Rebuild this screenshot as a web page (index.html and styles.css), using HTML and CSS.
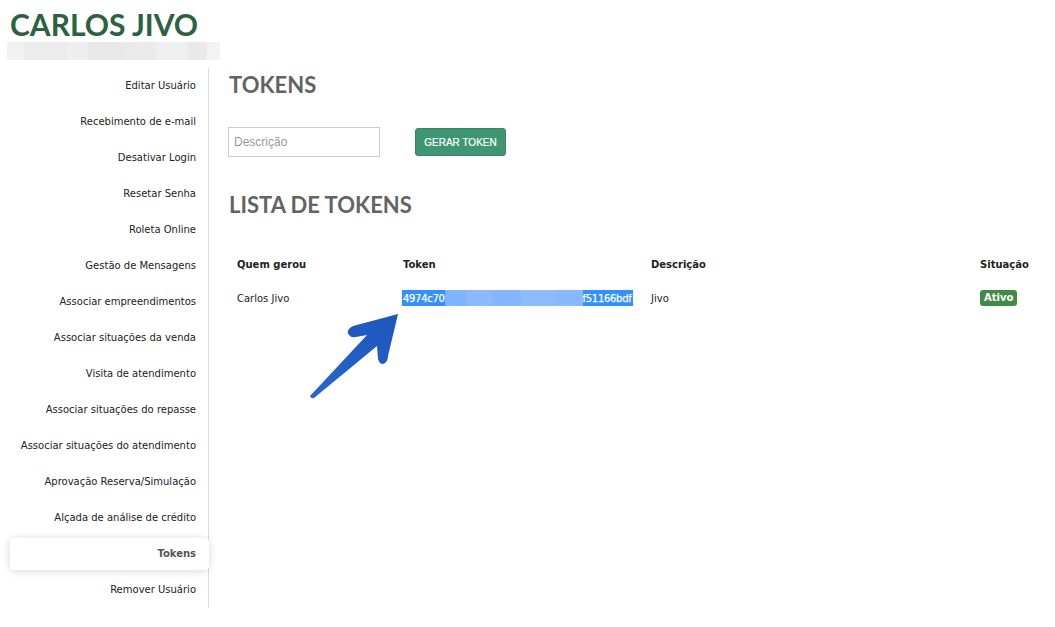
FILE: index.html
```html
<!DOCTYPE html>
<html lang="pt-BR">
<head>
<meta charset="utf-8">
<title>Tokens</title>
<link rel="stylesheet" href="styles.css">
</head>
<body>
<header class="top">
  <h1 class="user-name">CARLOS JIVO</h1>
  <div class="blur-bar"></div>
</header>
<div class="layout">
  <nav class="side">
    <a class="side-item">Editar Usuário</a>
    <a class="side-item">Recebimento de e-mail</a>
    <a class="side-item">Desativar Login</a>
    <a class="side-item">Resetar Senha</a>
    <a class="side-item">Roleta Online</a>
    <a class="side-item">Gestão de Mensagens</a>
    <a class="side-item">Associar empreendimentos</a>
    <a class="side-item">Associar situações da venda</a>
    <a class="side-item">Visita de atendimento</a>
    <a class="side-item">Associar situações do repasse</a>
    <a class="side-item">Associar situações do atendimento</a>
    <a class="side-item">Aprovação Reserva/Simulação</a>
    <a class="side-item">Alçada de análise de crédito</a>
    <a class="side-item active">Tokens</a>
    <a class="side-item">Remover Usuário</a>
  </nav>
  <main class="content">
    <h2 class="section-title">TOKENS</h2>
    <div class="token-form">
      <input class="desc-input" type="text" placeholder="Descrição">
      <button class="btn-gen">GERAR TOKEN</button>
    </div>
    <h2 class="section-title list-title">LISTA DE TOKENS</h2>
    <table class="tokens">
      <colgroup>
        <col class="c1"><col class="c2"><col class="c3"><col class="c4">
      </colgroup>
      <thead>
        <tr><th>Quem gerou</th><th>Token</th><th>Descrição</th><th>Situação</th></tr>
      </thead>
      <tbody>
        <tr>
          <td>Carlos Jivo</td>
          <td><span class="token-sel"><span class="token-part">4974c70</span><span class="token-blur"></span><span class="token-part">f51166bdf</span></span></td>
          <td>Jivo</td>
          <td><span class="badge">Ativo</span></td>
        </tr>
      </tbody>
    </table>
  </main>
</div>
<svg class="arrow" viewBox="300 305 110 100" width="110" height="100" aria-hidden="true">
  <defs>
    <linearGradient id="ag" x1="0" y1="1" x2="1" y2="0">
      <stop offset="0" stop-color="#2a66cc"/>
      <stop offset="1" stop-color="#1d55bd"/>
    </linearGradient>
  </defs>
  <path d="M398 314 L353 326 Q345 330 349 335 Q351 338 356 337 L367 335 L310 396 Q311 399 314 398 L377 346 L378 359 Q380 366 385 363 Q388 361 388 356 Z" fill="url(#ag)"/>
</svg>
</body>
</html>
```
FILE: styles.css
```css
* { box-sizing: border-box; }
html, body { margin: 0; padding: 0; background: #fff; }
body {
  position: relative;
  width: 1055px;
  min-height: 627px;
  font-family: "DejaVu Sans", Verdana, sans-serif;
  font-size: 10px;
  color: #222;
}
.top { padding: 6px 0 0 0; }
.user-name {
  margin: 0 0 0 10px;
  font-family: Lato, "Liberation Sans", sans-serif;
  font-weight: 700;
  font-size: 30px;
  line-height: 36px;
  color: #2c6141;
}
.blur-bar {
  margin-left: 7px;
  width: 213px;
  height: 18px;
  background: linear-gradient(90deg, #f1f1f1 0 8%, #ececec 8% 28%, #eeeeee 28% 38%, #e8e8e8 38% 55%, #eaeaea 55% 70%, #efefef 70% 85%, #e9e9e9 85% 94%, #f3f3f3 94% 100%);
}
.layout {
  display: flex;
  margin-top: 8px;
}
.side {
  width: 209px;
  flex: none;
  display: flex;
  flex-direction: column;
  border-right: 1px solid #dcdcdc;
}
.side-item {
  display: block;
  height: 36px;
  line-height: 36px;
  text-align: right;
  padding-right: 12px;
  color: #222;
  white-space: nowrap;
}
.side-item.active {
  height: 32px;
  line-height: 32px;
  margin: 2px -1px 2px 10px;
  background: #fff;
  border-radius: 4px;
  box-shadow: 0 1px 8px rgba(0,0,0,0.16);
  font-weight: 700;
  color: #555;
  padding-right: 13px;
}
.content {
  flex: 1;
  padding-left: 20px;
  padding-right: 8px;
}
.section-title {
  margin: 3px 0 0;
  font-family: Lato, "Liberation Sans", sans-serif;
  font-weight: 700;
  font-size: 22px;
  line-height: 28px;
  color: #636363;
}
.list-title { margin-top: 34px; }
.token-form {
  display: flex;
  align-items: center;
  margin-top: 28px;
  margin-left: -1px;
}
.desc-input {
  width: 152px;
  height: 30px;
  border: 1px solid #cccccc;
  padding: 0 5px;
  font-family: "Liberation Sans", Arial, sans-serif;
  font-size: 12px;
  color: #333;
  outline: none;
}
.desc-input::placeholder { color: #999; }
.btn-gen {
  margin-left: 35px;
  height: 28px;
  width: 91px;
  padding: 0;
  background: #3e9672;
  border: 1px solid #378563;
  border-radius: 3px;
  color: #fff;
  font-family: "Liberation Sans", Arial, sans-serif;
  font-size: 10px;
  -webkit-text-stroke: 0.2px #fff;
}
.tokens {
  margin-top: 29px;
  border-collapse: collapse;
  width: 818px;
  table-layout: fixed;
}
.c1 { width: 166px; }
.c2 { width: 248px; }
.c3 { width: 329px; }
.c4 { width: 75px; }
.tokens th {
  height: 32px;
  padding: 0 8px;
  text-align: left;
  font-weight: 700;
  color: #222;
}
.tokens td {
  height: 36px;
  padding: 0 8px;
  white-space: nowrap;
  color: #222;
}
.token-sel {
  display: inline-flex;
  align-items: center;
  width: 231px;
  height: 16px;
  margin-left: -1px;
  padding-left: 1px;
  background: #3390ff;
  color: #fff;
  overflow: hidden;
  vertical-align: middle;
}
.token-part {
  flex: none;
  letter-spacing: -0.3px;
  -webkit-text-stroke: 0.25px #fff;
}
.token-blur {
  flex: none;
  width: 138px;
  height: 16px;
  background: linear-gradient(90deg, #7fb2ff 0 15%, #8ab9ff 15% 35%, #85b6ff 35% 55%, #8cbbff 55% 80%, #88b8ff 80% 100%);
}
.badge {
  display: inline-block;
  background: #3f8b45;
  color: #fff;
  font-weight: 700;
  border-radius: 3px;
  padding: 0 4px;
  line-height: 16px;
  height: 16px;
}
.arrow {
  position: absolute;
  left: 300px;
  top: 305px;
}
```
